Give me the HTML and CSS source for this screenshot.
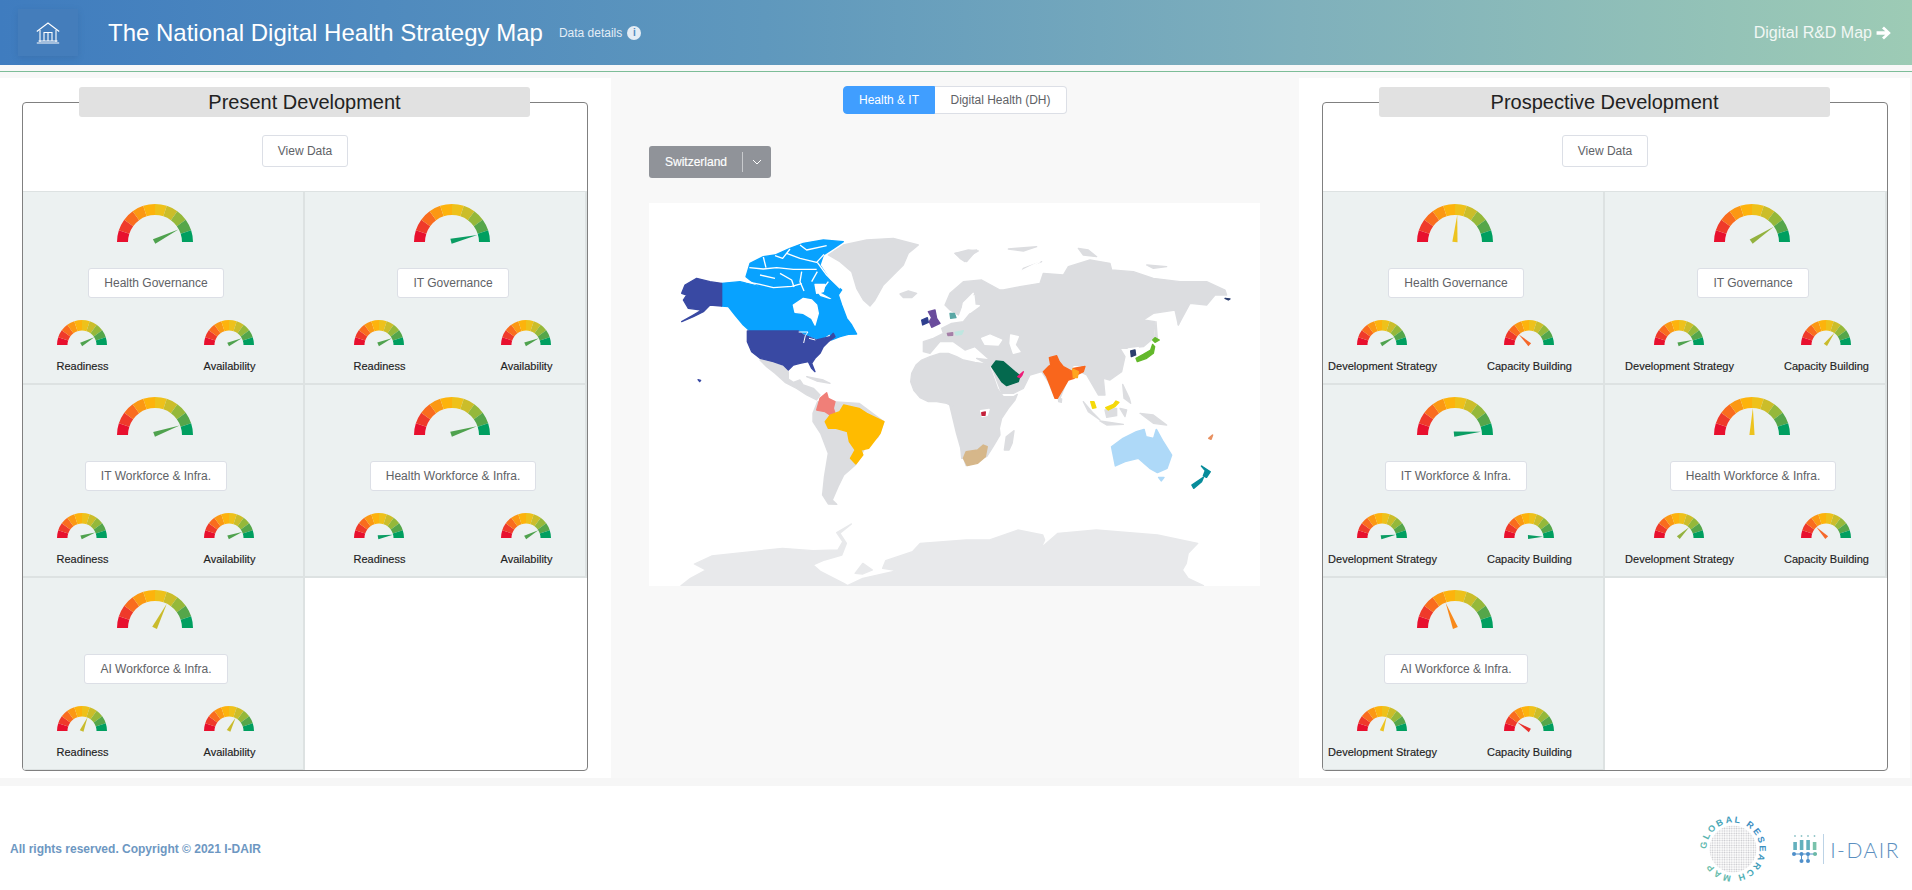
FILE: index.html
```html
<!DOCTYPE html>
<html lang="en">
<head>
<meta charset="utf-8">
<title>The National Digital Health Strategy Map</title>
<link rel="stylesheet" href="styles.css">
</head>
<body>
<svg class="sprite" aria-hidden="true">
  <defs>
    <g id="dial-lg" fill="none" stroke-width="11">
      <path stroke="#e8102e" d="M-32.5 0A32.5 32.5 0 0 1-30.91-10.04"/>
      <path stroke="#ef3a2a" d="M-30.91-10.04A32.5 32.5 0 0 1-26.29-19.1"/>
      <path stroke="#f96c1e" d="M-26.29-19.1A32.5 32.5 0 0 1-19.1-26.29"/>
      <path stroke="#fb9813" d="M-19.1-26.29A32.5 32.5 0 0 1-10.04-30.91"/>
      <path stroke="#fdb30c" d="M-10.04-30.91A32.5 32.5 0 0 1 0-32.5"/>
      <path stroke="#eec11a" d="M0-32.5A32.5 32.5 0 0 1 10.04-30.91"/>
      <path stroke="#cbbd2a" d="M10.04-30.91A32.5 32.5 0 0 1 19.1-26.29"/>
      <path stroke="#95b83a" d="M19.1-26.29A32.5 32.5 0 0 1 26.29-19.1"/>
      <path stroke="#55a64a" d="M26.29-19.1A32.5 32.5 0 0 1 30.91-10.04"/>
      <path stroke="#009f60" d="M30.91-10.04A32.5 32.5 0 0 1 32.5 0"/>
    </g>
    <g id="dial-sm" fill="none" stroke-width="10.5">
      <path stroke="#e8102e" d="M-19.75 0A19.75 19.75 0 0 1-18.78-6.1"/>
      <path stroke="#ef3a2a" d="M-18.78-6.1A19.75 19.75 0 0 1-15.98-11.61"/>
      <path stroke="#f96c1e" d="M-15.98-11.61A19.75 19.75 0 0 1-11.61-15.98"/>
      <path stroke="#fb9813" d="M-11.61-15.98A19.75 19.75 0 0 1-6.1-18.78"/>
      <path stroke="#fdb30c" d="M-6.1-18.78A19.75 19.75 0 0 1 0-19.75"/>
      <path stroke="#eec11a" d="M0-19.75A19.75 19.75 0 0 1 6.1-18.78"/>
      <path stroke="#cbbd2a" d="M6.1-18.78A19.75 19.75 0 0 1 11.61-15.98"/>
      <path stroke="#95b83a" d="M11.61-15.98A19.75 19.75 0 0 1 15.98-11.61"/>
      <path stroke="#55a64a" d="M15.98-11.61A19.75 19.75 0 0 1 18.78-6.1"/>
      <path stroke="#009f60" d="M18.78-6.1A19.75 19.75 0 0 1 19.75 0"/>
    </g>
    <polygon id="needle-lg" points="-2.6,0 2.6,0 0.4,-27"/>
    <polygon id="needle-sm" points="-2,0 2,0 0.3,-15"/>
  </defs>
</svg>

<header class="topbar">
  <a class="home-btn" href="#" aria-label="Home">
    <svg class="home-icon" viewBox="0 0 24 22" fill="none" stroke="#fff" stroke-width="1.1">
      <path d="M.8 9.500 12 1 23.200 9.500"/>
      <path d="M4 8v12M20 8v12M.8 21h22.400M2.500 19h19"/>
      <path d="M8 19v-8.500h8V19M12 10.500V19"/>
    </svg>
  </a>
  <h1 class="page-title">The National Digital Health Strategy Map</h1>
  <span class="data-details">Data details <i class="info-dot">i</i></span>
  <a class="rd-link" href="#">Digital R&amp;D Map
    <svg class="rd-arrow" viewBox="0 0 16 14"><path fill="#fff" d="M8.500 0 15.800 7 8.500 14 6.400 11.900 9.900 8.800H.6V5.200H9.900L6.400 2.100Z"/></svg>
  </a>
</header>
<div class="rule"></div>

<main class="layout">
  <section class="panel panel-left">
    <h2 class="panel-title">Present Development</h2>
    <div class="box">
      <div class="box-head"><button class="btn btn-view">View Data</button></div>
      <div class="cells">

        <div class="cell">
          <svg class="gauge-lg" viewBox="-38 -38 76 38"><use href="#dial-lg"/><use href="#needle-lg" class="n-green" transform="rotate(63 0 -1)"/></svg>
          <button class="btn btn-cell">Health Governance</button>
          <div class="subs">
            <div class="sub"><svg class="gauge-sm" viewBox="-25 -25 50 25"><use href="#dial-sm"/><use href="#needle-sm" class="n-green" transform="rotate(60 0 -1)"/></svg><span class="sub-label">Readiness</span></div>
            <div class="sub"><svg class="gauge-sm" viewBox="-25 -25 50 25"><use href="#dial-sm"/><use href="#needle-sm" class="n-green" transform="rotate(64 0 -1)"/></svg><span class="sub-label">Availability</span></div>
          </div>
        </div>

        <div class="cell">
          <svg class="gauge-lg" viewBox="-38 -38 76 38"><use href="#dial-lg"/><use href="#needle-lg" class="n-deep" transform="rotate(76 0 -1)"/></svg>
          <button class="btn btn-cell">IT Governance</button>
          <div class="subs">
            <div class="sub"><svg class="gauge-sm" viewBox="-25 -25 50 25"><use href="#dial-sm"/><use href="#needle-sm" class="n-green" transform="rotate(65 0 -1)"/></svg><span class="sub-label">Readiness</span></div>
            <div class="sub"><svg class="gauge-sm" viewBox="-25 -25 50 25"><use href="#dial-sm"/><use href="#needle-sm" class="n-green" transform="rotate(65 0 -1)"/></svg><span class="sub-label">Availability</span></div>
          </div>
        </div>

        <div class="cell">
          <svg class="gauge-lg" viewBox="-38 -38 76 38"><use href="#dial-lg"/><use href="#needle-lg" class="n-green" transform="rotate(70 0 -1)"/></svg>
          <button class="btn btn-cell">IT Workforce &amp; Infra.</button>
          <div class="subs">
            <div class="sub"><svg class="gauge-sm" viewBox="-25 -25 50 25"><use href="#dial-sm"/><use href="#needle-sm" class="n-green" transform="rotate(70 0 -1)"/></svg><span class="sub-label">Readiness</span></div>
            <div class="sub"><svg class="gauge-sm" viewBox="-25 -25 50 25"><use href="#dial-sm"/><use href="#needle-sm" class="n-green" transform="rotate(68 0 -1)"/></svg><span class="sub-label">Availability</span></div>
          </div>
        </div>

        <div class="cell">
          <svg class="gauge-lg" viewBox="-38 -38 76 38"><use href="#dial-lg"/><use href="#needle-lg" class="n-green" transform="rotate(72 0 -1)"/></svg>
          <button class="btn btn-cell">Health Workforce &amp; Infra.</button>
          <div class="subs">
            <div class="sub"><svg class="gauge-sm" viewBox="-25 -25 50 25"><use href="#dial-sm"/><use href="#needle-sm" class="n-deep" transform="rotate(80 0 -1)"/></svg><span class="sub-label">Readiness</span></div>
            <div class="sub"><svg class="gauge-sm" viewBox="-25 -25 50 25"><use href="#dial-sm"/><use href="#needle-sm" class="n-green" transform="rotate(60 0 -1)"/></svg><span class="sub-label">Availability</span></div>
          </div>
        </div>

        <div class="cell">
          <svg class="gauge-lg" viewBox="-38 -38 76 38"><use href="#dial-lg"/><use href="#needle-lg" class="n-olive" transform="rotate(26 0 -1)"/></svg>
          <button class="btn btn-cell">AI Workforce &amp; Infra.</button>
          <div class="subs">
            <div class="sub"><svg class="gauge-sm" viewBox="-25 -25 50 25"><use href="#dial-sm"/><use href="#needle-sm" class="n-olive" transform="rotate(22 0 -1)"/></svg><span class="sub-label">Readiness</span></div>
            <div class="sub"><svg class="gauge-sm" viewBox="-25 -25 50 25"><use href="#dial-sm"/><use href="#needle-sm" class="n-olive" transform="rotate(27 0 -1)"/></svg><span class="sub-label">Availability</span></div>
          </div>
        </div>

      </div>
    </div>
  </section>

  <section class="center">
    <div class="toggle">
      <button class="toggle-btn toggle-on">Health &amp; IT</button>
      <button class="toggle-btn">Digital Health (DH)</button>
    </div>
    <div class="country-select">
      <span class="country-name">Switzerland</span>
      <span class="country-caret"><svg viewBox="0 0 10 6" class="caret-icon" fill="none" stroke="#fff" stroke-width="1"><path d="M1 1 5 5 9 1"/></svg></span>
    </div>
    <svg class="world" viewBox="-33 -66 1833 1149">
      <!-- Antarctica and South America / southern Africa land -->
      <g transform="translate(0 525) scale(1.148 1)">
        <g class="ice">
          <polygon points="55,557 80,535 120,510 90,492 135,468 215,458 320,445 400,452 465,450 478,425 462,398 500,372 470,400 487,430 475,465 430,480 400,495 420,515 480,550 490,557"/>
          <polygon points="490,557 530,535 620,512 582,505 590,482 660,455 680,430 800,420 860,420 935,390 1000,405 1005,420 995,445 1040,400 1140,390 1300,405 1405,430 1380,460 1375,490 1365,510 1380,535 1420,557"/>
          <polygon points="510,520 530,490 555,510 530,522"/>
        </g>
        <g class="land">
          <polygon points="400,40 412,5 450,5 520,10 585,65 570,110 535,145 510,195 480,225 465,260 450,300 462,313 440,312 425,285 430,230 440,160 420,100 400,65"/>
          <polygon points="752,-10 775,100 790,160 800,197 850,170 865,125 887,100 885,40 925,-10"/>
          <polygon points="900,150 905,110 925,92 920,130 912,150"/>
        </g>
      </g>

      <!-- Americas, Greenland -->
      <g class="land">
        <polygon points="505,90 550,60 620,45 700,40 775,60 745,85 730,120 700,150 670,180 645,225 630,243 610,225 590,190 575,140 540,110"/>
        <polygon points="720,207 745,198 770,205 755,218 730,218"/>
        <polygon points="885,85 925,75 955,78 925,95 915,110 900,100"/>
        <polygon points="300,405 340,412 370,425 385,440 385,462 400,472 420,465 430,480 460,490 480,510 470,525 440,510 410,490 375,472 345,445 320,425"/>
        <polygon points="440,455 490,465 510,475 470,468"/>
      </g>
      <g class="c-ca">
        <polygon points="185,175 240,170 300,185 370,180 430,175 460,190 480,215 510,225 535,210 545,240 560,280 575,300 590,327 565,328 540,335 515,345 510,325 480,345 440,330 415,318 270,318 250,300 225,270 205,245 185,243"/>
        <polygon points="258,155 270,115 310,95 345,90 390,70 430,55 490,45 550,50 520,70 490,90 480,120 510,165 545,195 525,225 490,205 430,176 300,185 270,165"/>
      </g>
      <g class="channels">
        <polyline points="268,128 310,132 350,128 400,133 470,133"/>
        <polyline points="258,170 300,178 340,188 395,184 425,176"/>
        <polyline points="360,145 395,165 402,186"/>
        <polyline points="425,140 420,170 432,198"/>
        <polyline points="345,92 368,100 390,72"/>
        <polyline points="380,85 420,100 470,112 492,88"/>
        <polyline points="472,112 500,150 540,190"/>
        <polyline points="472,140 455,170"/>
        <polyline points="300,150 345,160"/>
        <polyline points="310,96 318,128"/>
        <polyline points="420,60 440,75 500,62"/>
        <polyline points="505,170 490,190"/>
      </g>
      <polygon class="c-white" points="400,240 430,220 455,225 470,240 475,265 465,300 455,280 430,265 405,262"/>
      <polygon class="c-white" points="465,178 495,178 490,200 470,205"/>
      <g class="c-us">
        <polygon points="262,318 415,318 430,330 445,335 470,345 510,335 520,325 525,335 505,350 490,365 480,385 465,400 455,415 465,440 455,430 445,410 420,415 400,420 385,435 370,420 340,410 300,400 275,380 262,350"/>
        <polygon points="65,205 75,180 110,160 150,170 185,175 185,243 150,240 130,260 100,275 65,290 100,270 125,255 85,250 70,225 80,210"/>
        <polygon points="114,464 122,466 119,470"/>
      </g>
      <polyline class="lake" points="416,321 444,321 436,332 431,354"/>
      <polyline class="lake" points="447,340 466,345"/>
      <polygon class="c-co" points="470,555 480,520 500,503 505,520 525,530 520,550 525,565 510,570 495,560"/>

      <!-- Eurasia, Africa, and east -->
      <g transform="translate(780 0)">
        <g class="land">
          <polygon points="-28,470 -25,445 -12,420 5,405 30,395 60,385 85,385 110,395 130,405 165,412 205,418 215,440 232,490 250,515 265,525 292,508 285,525 265,550 245,580 238,610 240,630 225,655 215,672 200,695 125,700 120,640 112,600 118,565 100,545 80,535 50,530 25,530 0,518 -18,497"/>
          <polygon points="75,240 90,205 130,170 185,165 240,195 250,195 300,185 360,175 370,145 430,150 445,125 510,105 570,115 575,135 640,140 700,160 780,170 860,170 915,195 920,210 885,210 860,240 810,235 775,300 765,255 700,265 670,285 705,290 700,340 670,365 620,370 600,370 615,395 605,440 570,465 550,460 555,510 535,510 500,450 480,440 495,425 460,420 420,520 405,520 385,470 365,440 330,450 310,490 280,505 245,505 215,425 170,400 210,405 165,365 135,375 100,350 60,350 30,385 10,380 10,350 40,340 70,325 65,310 95,295 130,290 150,265 170,250 165,205 130,230 115,270 90,255"/>
          <polygon points="295,160 310,130 365,110 325,125 310,145"/>
          <polygon points="105,85 170,75 140,110"/>
          <polygon points="265,72 350,65 310,78"/>
          <polygon points="475,70 505,75 530,95 490,90"/>
          <polygon points="680,120 740,125 700,130"/>
          <polygon points="775,300 775,265 805,232 790,265"/>
          <polygon points="708,290 712,340 704,340"/>
          <polygon points="555,555 590,550 590,572 560,577"/>
          <polygon points="490,530 520,565 540,585 505,560"/>
          <polygon points="540,588 610,598 560,600"/>
          <polygon points="660,565 700,570 740,600 700,595"/>
          <polygon points="608,478 628,520 632,535 612,520"/>
          <polygon points="600,550 620,555 615,575"/>
          <polygon points="415,520 425,522 424,532 416,530"/>
        </g>
        <polygon class="c-white" points="130,235 160,205 148,240 178,242 150,262 125,268"/>
        <polygon class="c-white" points="185,340 210,330 245,345 235,360 195,358"/>
        <polygon class="c-white" points="272,330 295,335 285,360 300,380 280,385 270,355"/>
        <polygon class="c-white" points="300,140 360,110 335,125 305,165 290,160"/>
        <polygon class="c-uk" points="25,260 45,255 50,280 60,295 35,307 28,290 35,278"/>
        <polygon class="c-ie" points="5,285 22,278 25,292 8,300"/>
        <polygon class="c-dk" points="90,265 103,265 108,278 92,280"/>
        <polygon class="c-ch" points="82,325 98,323 98,331 84,332"/>
        <polygon class="c-at" points="105,322 130,317 125,328 108,330"/>
        <polygon class="c-sa" points="215,425 228,408 250,410 285,440 300,452 295,470 260,482 245,470"/>
        <polygon class="c-ae" points="293,455 310,440 305,452 300,458"/>
        <polygon class="c-in" points="370,440 385,425 392,420 388,398 410,392 418,410 430,425 458,440 460,430 495,424 490,440 470,450 462,460 445,465 430,490 412,520 405,520 390,480 380,455"/>
        <polygon class="c-bd" points="458,432 475,440 472,458 460,458"/>
        <polygon class="c-white" points="625,372 655,368 652,398 628,400"/>
        <polygon class="c-kr" points="632,378 645,375 647,390 634,395"/>
        <polygon class="c-jp" points="648,400 652,410 680,400 700,385 704,365 698,358 692,375 670,388"/>
        <polygon class="c-jp" points="698,345 705,338 718,345 705,352"/>
        <polygon class="c-my" points="512,530 522,530 528,548 518,550"/>
        <polygon class="c-my" points="557,548 580,538 588,528 597,532 585,545 565,555"/>
        <polygon class="c-ru-tip" points="915,220 930,222 925,225"/>
      </g>

      <!-- coloured southern countries, over the land -->
      <g transform="translate(0 525) scale(1.148 1)">
        <polygon class="c-brazil" points="432,65 445,45 470,35 480,15 520,25 540,40 585,65 575,100 545,145 525,150 530,165 512,192 498,175 510,150 495,125 490,95 460,85 440,85"/>
        <polygon class="c-za" points="793,175 800,155 830,150 845,135 855,140 850,170 830,190 803,197"/>
        <polygon class="c-au" points="1180,140 1210,115 1245,95 1265,88 1270,110 1290,115 1297,88 1315,125 1337,165 1325,205 1300,218 1280,205 1250,175 1215,185 1190,198"/>
        <polygon class="c-au" points="1303,232 1317,232 1310,243"/>
        <polygon class="c-nz" points="1415,198 1438,215 1428,232 1420,228 1425,212"/>
        <polygon class="c-nz" points="1390,255 1420,232 1415,245 1395,265"/>
        <polygon class="c-white" points="838,32 860,28 855,46 842,50"/>
        <polygon class="c-rw" points="841,38 850,36 849,46 842,46"/>
        <polygon class="c-fj" points="1434,115 1444,105 1440,118"/>
      </g>
    </svg>
  </section>

  <section class="panel panel-right">
    <h2 class="panel-title">Prospective Development</h2>
    <div class="box">
      <div class="box-head"><button class="btn btn-view">View Data</button></div>
      <div class="cells">

        <div class="cell">
          <svg class="gauge-lg" viewBox="-38 -38 76 38"><use href="#dial-lg"/><use href="#needle-lg" class="n-yellow" transform="rotate(4 0 -1)"/></svg>
          <button class="btn btn-cell">Health Governance</button>
          <div class="subs">
            <div class="sub"><svg class="gauge-sm" viewBox="-25 -25 50 25"><use href="#dial-sm"/><use href="#needle-sm" class="n-green" transform="rotate(60 0 -1)"/></svg><span class="sub-label">Development Strategy</span></div>
            <div class="sub"><svg class="gauge-sm" viewBox="-25 -25 50 25"><use href="#dial-sm"/><use href="#needle-sm" class="n-orange" transform="rotate(-48 0 -1)"/></svg><span class="sub-label">Capacity Building</span></div>
          </div>
        </div>

        <div class="cell">
          <svg class="gauge-lg" viewBox="-38 -38 76 38"><use href="#dial-lg"/><use href="#needle-lg" class="n-lime" transform="rotate(56 0 -1)"/></svg>
          <button class="btn btn-cell">IT Governance</button>
          <div class="subs">
            <div class="sub"><svg class="gauge-sm" viewBox="-25 -25 50 25"><use href="#dial-sm"/><use href="#needle-sm" class="n-green" transform="rotate(72 0 -1)"/></svg><span class="sub-label">Development Strategy</span></div>
            <div class="sub"><svg class="gauge-sm" viewBox="-25 -25 50 25"><use href="#dial-sm"/><use href="#needle-sm" class="n-olive" transform="rotate(36 0 -1)"/></svg><span class="sub-label">Capacity Building</span></div>
          </div>
        </div>

        <div class="cell">
          <svg class="gauge-lg" viewBox="-38 -38 76 38"><use href="#dial-lg"/><use href="#needle-lg" class="n-deep" transform="rotate(84 0 -1)"/></svg>
          <button class="btn btn-cell">IT Workforce &amp; Infra.</button>
          <div class="subs">
            <div class="sub"><svg class="gauge-sm" viewBox="-25 -25 50 25"><use href="#dial-sm"/><use href="#needle-sm" class="n-deep" transform="rotate(80 0 -1)"/></svg><span class="sub-label">Development Strategy</span></div>
            <div class="sub"><svg class="gauge-sm" viewBox="-25 -25 50 25"><use href="#dial-sm"/><use href="#needle-sm" class="n-deep" transform="rotate(88 0 -1)"/></svg><span class="sub-label">Capacity Building</span></div>
          </div>
        </div>

        <div class="cell">
          <svg class="gauge-lg" viewBox="-38 -38 76 38"><use href="#dial-lg"/><use href="#needle-lg" class="n-yellow" transform="rotate(1 0 -1)"/></svg>
          <button class="btn btn-cell">Health Workforce &amp; Infra.</button>
          <div class="subs">
            <div class="sub"><svg class="gauge-sm" viewBox="-25 -25 50 25"><use href="#dial-sm"/><use href="#needle-sm" class="n-lime" transform="rotate(45 0 -1)"/></svg><span class="sub-label">Development Strategy</span></div>
            <div class="sub"><svg class="gauge-sm" viewBox="-25 -25 50 25"><use href="#dial-sm"/><use href="#needle-sm" class="n-orange" transform="rotate(-45 0 -1)"/></svg><span class="sub-label">Capacity Building</span></div>
          </div>
        </div>

        <div class="cell">
          <svg class="gauge-lg" viewBox="-38 -38 76 38"><use href="#dial-lg"/><use href="#needle-lg" class="n-amber" transform="rotate(-22 0 -1)"/></svg>
          <button class="btn btn-cell">AI Workforce &amp; Infra.</button>
          <div class="subs">
            <div class="sub"><svg class="gauge-sm" viewBox="-25 -25 50 25"><use href="#dial-sm"/><use href="#needle-sm" class="n-yellow" transform="rotate(18 0 -1)"/></svg><span class="sub-label">Development Strategy</span></div>
            <div class="sub"><svg class="gauge-sm" viewBox="-25 -25 50 25"><use href="#dial-sm"/><use href="#needle-sm" class="n-red" transform="rotate(-58 0 -1)"/></svg><span class="sub-label">Capacity Building</span></div>
          </div>
        </div>

      </div>
    </div>
  </section>
</main>
<div class="band"></div>

<footer class="footer">
  <p class="copyright">All rights reserved. Copyright © 2021 I-DAIR</p>
  <div class="logos">
    <svg class="globe" viewBox="-38 -38 76 76">
      <defs>
        <pattern id="globe-dots" width="2.4" height="2.4" patternUnits="userSpaceOnUse">
          <circle cx="1.200" cy="1.200" r=".8" fill="#c6c6ca"/>
        </pattern>
        <linearGradient id="globe-ink" gradientUnits="userSpaceOnUse" x1="-30" y1="20" x2="30" y2="-20">
          <stop offset="0" stop-color="#72c2a8"/>
          <stop offset=".5" stop-color="#45a8b5"/>
          <stop offset="1" stop-color="#3a86c4"/>
        </linearGradient>
        <path id="globe-ring" d="M-26.500 0A26.500 26.500 0 1 1 26.500 0A26.500 26.500 0 1 1-26.500 0"/>
      </defs>
      <circle r="23.500" fill="url(#globe-dots)"/>
      <text class="globe-text"><textPath href="#globe-ring" textLength="150">GLOBAL RESEARCH MAP</textPath></text>
    </svg>
    <svg class="idair-mark" viewBox="0 0 26 30">
      <g fill="#8fc4c8"><circle cx="3" cy="2" r=".9"/><circle cx="9.500" cy="2" r=".9"/><circle cx="16" cy="2" r=".9"/><circle cx="22.500" cy="2" r=".9"/></g>
      <g fill="#63b0bd"><rect x="1.300" y="8" width="3.600" height="8"/><rect x="7.800" y="6" width="3.600" height="10"/><rect x="14.300" y="6" width="3.600" height="10"/></g>
      <rect x="20.800" y="8" width="3.600" height="8" fill="#79c2ab"/>
      <path d="M1 20h24" stroke="#4f8fca" stroke-width="1"/>
      <g fill="#4f8fca"><circle cx="2" cy="20" r="2"/><circle cx="9.500" cy="20" r="2"/><circle cx="16" cy="20" r="2"/><circle cx="9.500" cy="27" r="2"/><circle cx="16" cy="27" r="2"/><path d="M9 20h1v7H9zM15.500 20h1v7h-1z"/></g>
      <circle cx="23" cy="20" r="2" fill="#6bb9a6"/>
    </svg>
    <span class="idair-bar"></span>
    <span class="idair-name">I-DAIR</span>
  </div>
</footer>
</body>
</html>
```
FILE: styles.css
```css
* { box-sizing: border-box; }
html, body { margin: 0; padding: 0; }
body {
  width: 1912px;
  height: 890px;
  overflow: hidden;
  background: #fff;
  font-family: "Liberation Sans", Arial, sans-serif;
}
.sprite { display: none; }

/* header */
.topbar {
  display: flex;
  align-items: center;
  height: 65px;
  padding: 0 21px 0 18px;
  background: linear-gradient(90deg, #3f7cbf 0%, #5f98bd 40%, #7fb0bc 68%, #9dcbb5 100%);
  color: #fff;
}
.home-btn {
  display: flex;
  align-items: center;
  justify-content: center;
  width: 60px;
  height: 47px;
  background: #447dbb;
  box-shadow: 0 2px 6px rgba(40, 80, 130, .22);
}
.home-icon { width: 24px; height: 22px; }
.page-title {
  margin: 0 0 0 30px;
  font-size: 24px;
  font-weight: 400;
  line-height: 30px;
}
.data-details {
  display: flex;
  align-items: center;
  gap: 5px;
  margin-left: 16px;
  font-size: 12px;
  color: #e3edf6;
}
.info-dot {
  display: block;
  width: 14px;
  height: 14px;
  border-radius: 50%;
  background: #e4edf5;
  color: #4f8abd;
  font: bold 10px/14px "Liberation Sans", Arial, sans-serif;
  text-align: center;
}
.rd-link {
  display: flex;
  align-items: center;
  gap: 4px;
  margin-left: auto;
  color: #f1f7f4;
  font-size: 16px;
  text-decoration: none;
}
.rd-arrow { width: 15px; height: 14px; }

.rule {
  height: 13px;
  background: linear-gradient(180deg, #f8f8f8 6px, #7dbd98 6px, #7dbd98 7px, #f8f8f8 7px);
}

/* three columns */
.layout {
  display: grid;
  grid-template-columns: 611px 688px 611px;
  height: 700px;
  background: #f8f8f8;
}
.panel { background: #fff; padding-top: 9px; }
.panel-left { padding-left: 22px; }
.panel-right { padding-left: 23px; }
.panel-title {
  position: relative;
  z-index: 1;
  width: 451px;
  height: 30px;
  margin: 0 0 0 57px;
  background: #e1e1e1;
  border-radius: 3px;
  font-size: 20px;
  font-weight: 400;
  line-height: 30px;
  text-align: center;
  color: #222;
}
.box {
  width: 566px;
  height: 669px;
  margin-top: -15px;
  border: 1px solid #808080;
  border-radius: 4px;
  overflow: hidden;
}
.box-head {
  display: flex;
  justify-content: center;
  height: 88px;
  padding-top: 32px;
}
.btn {
  background: #fff;
  border: 1px solid #dcdfe6;
  border-radius: 3px;
  color: #606266;
  font: 12px "Liberation Sans", Arial, sans-serif;
}
.btn-view { width: 86px; height: 32px; }
.cells {
  display: grid;
  grid-template-columns: 282px 282px;
  grid-auto-rows: 193px;
  border-top: 1px solid #dde2e2;
}
.cell {
  display: flex;
  flex-direction: column;
  align-items: center;
  padding: 12px 16px 0 0;
  background: #ecf1f1;
  border-right: 2px solid #dde2e2;
  border-bottom: 2px solid #dde2e2;
}
.cell:nth-child(even) { padding: 12px 0 0 14px; }
.gauge-lg { display: block; width: 76px; height: 38px; overflow: visible; flex: none; }
.gauge-sm { display: block; width: 50px; height: 25px; overflow: visible; flex: none; }
.btn-cell { height: 30px; margin: 26px 0 0 2px; padding: 0 15px; flex: none; }
.subs {
  display: grid;
  grid-template-columns: 147px 147px;
  justify-content: center;
  width: 266px;
  margin-top: 22px;
}
.sub { display: flex; flex-direction: column; align-items: center; }
.sub-label {
  margin: 14px 0 0 2px;
  font-size: 11px;
  line-height: 14px;
  color: #222;
  white-space: nowrap;
  -webkit-text-stroke: .15px #222;
}
.n-green { fill: #4fa24e; }
.n-deep { fill: #0a9d63; }
.n-lime { fill: #93b23f; }
.n-olive { fill: #c9bb2c; }
.n-yellow { fill: #edc31f; }
.n-amber { fill: #f8891b; }
.n-orange { fill: #f5682a; }
.n-red { fill: #e8302c; }

/* centre column */
.center {
  display: flex;
  flex-direction: column;
  padding-top: 8px;
}
.toggle {
  display: flex;
  align-self: center;
  height: 28px;
}
.toggle-btn {
  background: #fff;
  border: 1px solid #dcdfe6;
  border-left: 0;
  border-radius: 0 4px 4px 0;
  color: #606266;
  font: 12px "Liberation Sans", Arial, sans-serif;
  padding: 0;
  width: 132px;
  white-space: nowrap;
}
.toggle-on {
  width: 92px;
  background: #409eff;
  border: 1px solid #409eff;
  border-radius: 4px 0 0 4px;
  color: #fff;
}
.country-select {
  display: flex;
  align-items: center;
  align-self: flex-start;
  width: 122px;
  height: 32px;
  margin: 32px 0 0 38px;
  background: #909399;
  border-radius: 3px;
  color: #fff;
  font-size: 12px;
}
.country-name { width: 93px; padding-left: 16px; -webkit-text-stroke: .15px #fff; }
.country-caret {
  display: flex;
  align-items: center;
  justify-content: center;
  flex: 1;
  height: 20px;
  border-left: 1px solid #c8cacd;
}
.caret-icon { width: 10px; height: 6px; }
.world {
  display: block;
  width: 611px;
  height: 383px;
  margin: 25px 0 0 38px;
  background: #fff;
  filter: blur(.45px);
}
.world polygon { stroke-width: 4; stroke-linejoin: round; }
.land polygon { fill: #dcdde0; stroke: #dcdde0; }
.ice polygon { fill: #e8e9eb; stroke: #e8e9eb; }
.channels polyline { fill: none; stroke: #fff; stroke-width: 4; stroke-linejoin: round; }
.lake { fill: none; stroke: #fff; stroke-width: 3; stroke-linejoin: round; }
.c-white { fill: #fff; stroke: #fff; }
.c-ca { fill: #08a2ff; stroke: #08a2ff; }
.c-us { fill: #3949a3; stroke: #3949a3; }
.c-co { fill: #f07f78; stroke: #f07f78; }
.c-brazil { fill: #ffbb00; stroke: #ffbb00; }
.c-za { fill: #d6b78a; stroke: #d6b78a; }
.c-au { fill: #aed9f8; stroke: #aed9f8; }
.c-nz { fill: #078c9b; stroke: #078c9b; }
.c-rw { fill: #c4203a; stroke: #c4203a; }
.c-fj { fill: #e89060; stroke: #e89060; }
.c-uk { fill: #6a4c9c; stroke: #6a4c9c; }
.c-ie { fill: #2f3f8f; stroke: #2f3f8f; }
.c-dk { fill: #5aa7a5; stroke: #5aa7a5; }
.c-ch { fill: #a57fa8; stroke: #a57fa8; }
.c-at { fill: #bfe6e0; stroke: #bfe6e0; }
.c-sa { fill: #04694e; stroke: #04694e; }
.c-ae { fill: #ee1c78; stroke: #ee1c78; }
.c-in { fill: #f9661c; stroke: #f9661c; }
.c-bd { fill: #ffa51f; stroke: #ffa51f; }
.c-kr { fill: #2c3e6e; stroke: #2c3e6e; }
.c-jp { fill: #63b82b; stroke: #63b82b; }
.c-my { fill: #f5d90a; stroke: #f5d90a; }
.c-ru-tip { fill: #2c3e6e; stroke: #2c3e6e; }

/* footer */
.band { height: 8px; background: #f6f6f6; }
.footer {
  display: flex;
  align-items: center;
  justify-content: space-between;
  height: 104px;
  padding: 22px 12px 0 10px;
}
.copyright {
  margin: 0;
  font-size: 12px;
  font-weight: 700;
  color: #6d97c2;
}
.logos { display: flex; align-items: center; }
.globe { width: 76px; height: 76px; overflow: visible; }
.globe-text {
  font: bold 9px "Liberation Sans", Arial, sans-serif;
  fill: url(#globe-ink);
}
.idair-mark { width: 26px; height: 30px; margin-left: 21px; }
.idair-bar { width: 1px; height: 30px; margin: 0 6px 0 5px; background: #bcd3e6; }
.idair-name {
  font-family: "Lato", sans-serif;
  font-size: 21px;
  font-weight: 300;
  letter-spacing: 1.5px;
  color: #5b8fc0;
}
```
